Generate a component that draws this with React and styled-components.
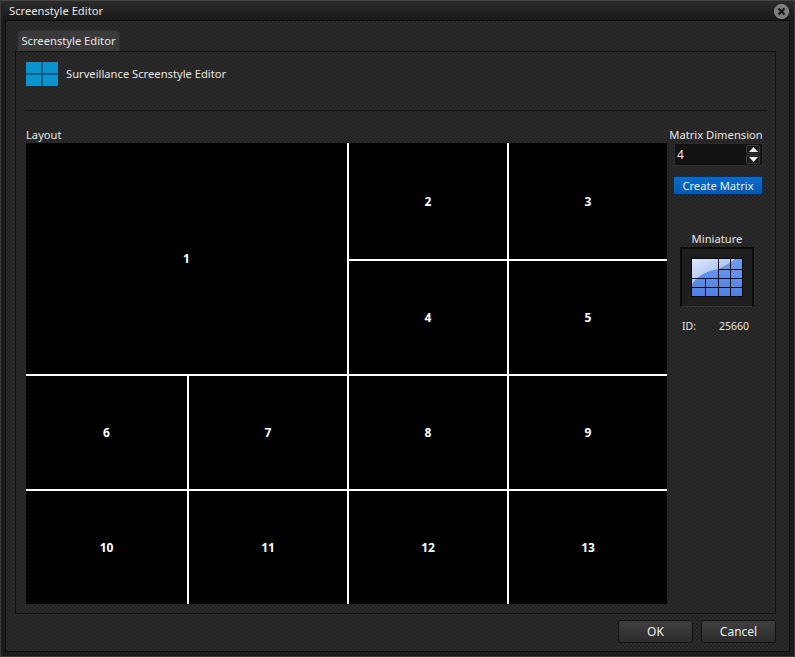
import React from 'react';
import styled, { createGlobalStyle } from 'styled-components';

const texture = `
  background-color: #262626;
  background-image: repeating-conic-gradient(#2c2c2c 0 25%, #222222 0 50%);
  background-size: 4px 4px;
`;

const Global = createGlobalStyle`
  html, body { margin: 0; padding: 0; background: #1a1a1a; }
  body { font-family: "Noto Sans", "Open Sans", sans-serif; font-size: 11.2px; color: #e6e6e6; }
`;

const Window = styled.div`
  width: 795px;
  height: 657px;
  box-sizing: border-box;
  display: flex;
  flex-direction: column;
  background: #1b1b1b;
  border: 1px solid #3a3a3a;
  border-top-color: #444;
  overflow: hidden;
`;

const TitleBar = styled.div`
  height: 19px;
  flex: none;
  display: flex;
  align-items: center;
  justify-content: space-between;
  padding: 0 5px 0 8px;
  background: linear-gradient(#2b2b2b, #191919);
  line-height: 19px;
`;

const CloseButton = styled.div`
  width: 15px;
  height: 15px;
  box-sizing: border-box;
  margin-top: 1px;
  border-radius: 50%;
  background: #7c7c7c;
  border: 1px solid #959595;
  display: flex;
  align-items: center;
  justify-content: center;
`;

const Frame = styled.div`
  ${texture}
  flex: 1;
  margin: 0 4px 4px 4px;
  padding: 9px 13px 0 9px;
  border: 1px solid #0c0c0c;
  display: flex;
  flex-direction: column;
  min-height: 0;
`;

const TabStrip = styled.div`
  display: flex;
  height: 21px;
  padding-left: 2px;
  flex: none;
`;

const Tab = styled.div`
  width: 103px;
  box-sizing: border-box;
  background: #3a3a3a;
  border-radius: 4px 4px 0 0;
  border: 1px solid #2e2e2e;
  border-bottom: none;
  text-align: center;
  line-height: 19px;
`;

const Panel = styled.div`
  height: 563px;
  box-sizing: border-box;
  border: 1px solid #111;
  padding: 10px 8px 0 10px;
  display: flex;
  flex-direction: column;
  flex: none;
`;

const Header = styled.div`
  display: flex;
  align-items: center;
  gap: 8px;
  height: 24px;
  flex: none;
`;

const HeaderTitle = styled.span`
  margin-top: -2px;
`;

const Separator = styled.div`
  height: 1px;
  flex: none;
  background: #111;
  margin-top: 24px;
`;

const Content = styled.div`
  display: flex;
  margin-top: 16px;
  gap: 2px;
`;

const LayoutColumn = styled.div`
  width: 641px;
  display: flex;
  flex-direction: column;
`;

const Label = styled.div`
  height: 16px;
  line-height: 16px;
`;

const Matrix = styled.div`
  height: 461px;
  display: grid;
  grid-template-columns: 161px 158px 158px 158px;
  grid-template-rows: 116px 113px 113px 113px;
  gap: 2px;
  background: #fff;
`;

const Cell = styled.div`
  background: #000;
  color: #fff;
  font-weight: 700;
  font-size: 12px;
  display: flex;
  align-items: center;
  justify-content: center;
  ${p => p.$area && `grid-column: ${p.$area[0]}; grid-row: ${p.$area[1]};`}
`;

const Sidebar = styled.div`
  width: 94px;
  display: flex;
  flex-direction: column;
`;

const SideTitle = styled.div`
  height: 16px;
  line-height: 16px;
  text-align: center;
  white-space: nowrap;
`;

const Spinner = styled.div`
  margin: 0 0 0 5px;
  height: 23px;
  width: 89px;
  box-sizing: border-box;
  background: #121212;
  border: 1px solid #2c2c2c;
  display: flex;
  align-items: center;
  justify-content: space-between;
  padding: 0 2px 0 2px;
  font-size: 12px;
`;

const SpinButtons = styled.div`
  display: flex;
  flex-direction: column;
  gap: 1px;
`;

const SpinButton = styled.div`
  width: 14px;
  height: 9px;
  box-sizing: border-box;
  background: #1a1a1a;
  border: 1px solid #3c3c3c;
  border-radius: 2px;
  display: flex;
  align-items: center;
  justify-content: center;
`;

const PrimaryButton = styled.div`
  margin: 10px 0 0 4px;
  height: 19px;
  width: 90px;
  box-sizing: border-box;
  background: linear-gradient(#0a6cca, #0558ae);
  border: 1px solid #0a2e58;
  border-radius: 2px;
  text-align: center;
  line-height: 17px;
  color: #e6eef8;
`;

const MiniatureBlock = styled.div`
  margin-top: 36px;
  padding-left: 2px;
  display: flex;
  flex-direction: column;
  align-items: center;
`;

const MiniatureTitle = styled.div`
  height: 15px;
  line-height: 15px;
  margin-bottom: 1px;
`;

const MiniatureFrame = styled.div`
  width: 74px;
  height: 60px;
  box-sizing: border-box;
  background: #1e1e1e;
  border: 2px solid #0a0a0a;
  border-bottom: 1px solid #333;
  display: flex;
  align-items: center;
  justify-content: center;
`;

const IdRow = styled.div`
  display: flex;
  justify-content: space-between;
  margin-top: 11px;
  width: 67px;
  margin-right: 3px;
  font-size: 10.5px;
  line-height: 16px;
`;

const Footer = styled.div`
  display: flex;
  justify-content: flex-end;
  gap: 8px;
  margin-top: 6px;
`;

const FooterButton = styled.div`
  width: 75px;
  height: 23px;
  box-sizing: border-box;
  background: linear-gradient(#3f3f3f, #2c2c2c);
  border: 1px solid #111;
  border-radius: 3px;
  text-align: center;
  line-height: 21px;
  color: #eee;
  font-size: 12px;
`;

const cells = [
  { n: 1, area: ['1 / span 2', '1 / span 2'] },
  { n: 2 }, { n: 3 }, { n: 4 }, { n: 5 },
  { n: 6 }, { n: 7 }, { n: 8 }, { n: 9 },
  { n: 10 }, { n: 11 }, { n: 12 }, { n: 13 },
];

const WindowsIcon = () => (
  <svg width="32" height="24" viewBox="0 0 32 24">
    <rect width="32" height="24" fill="#0a93cd" />
    <rect x="15" width="2" height="24" fill="#0b5f86" />
    <rect y="11" width="32" height="2" fill="#0b5f86" />
  </svg>
);

const MiniatureIcon = () => (
  <svg width="52" height="39" viewBox="0 0 52 39">
    <defs>
      <linearGradient id="mb" x1="0" y1="0" x2="0" y2="1">
        <stop offset="0" stopColor="#6f9bee" />
        <stop offset="1" stopColor="#4f80e4" />
      </linearGradient>
      <linearGradient id="ml" x1="0" y1="0" x2="1" y2="1">
        <stop offset="0" stopColor="#dfe8fb" />
        <stop offset="1" stopColor="#8aa9ee" />
      </linearGradient>
    </defs>
    <rect width="52" height="39" fill="#0b0b0b" />
    <rect x="1" y="1" width="50" height="37" fill="url(#mb)" />
    <path d="M1 1H44C38 6 33 8 27 11C15 13 7 18 1 26Z" fill="url(#ml)" />
    <g fill="#0b0b0b">
      <rect x="27" y="0" width="1" height="39" />
      <rect x="39" y="0" width="1" height="39" />
      <rect x="27" y="11" width="25" height="1" />
      <rect x="0" y="20" width="52" height="1" />
      <rect x="0" y="29" width="52" height="1" />
      <rect x="14" y="20" width="1" height="19" />
    </g>
  </svg>
);

export default function App() {
  return (
    <>
      <Global />
      <Window>
        <TitleBar>
          <span>Screenstyle Editor</span>
          <CloseButton>
            <svg width="9" height="9" viewBox="0 0 9 9">
              <path d="M1.5 1.5l6 6M7.5 1.5l-6 6" stroke="#111" strokeWidth="2" />
            </svg>
          </CloseButton>
        </TitleBar>
        <Frame>
          <TabStrip><Tab>Screenstyle Editor</Tab></TabStrip>
          <Panel>
            <Header>
              <WindowsIcon />
              <HeaderTitle>Surveillance Screenstyle Editor</HeaderTitle>
            </Header>
            <Separator />
            <Content>
              <LayoutColumn>
                <Label>Layout</Label>
                <Matrix>
                  {cells.map(c => <Cell key={c.n} $area={c.area}>{c.n}</Cell>)}
                </Matrix>
              </LayoutColumn>
              <Sidebar>
                <SideTitle>Matrix Dimension</SideTitle>
                <Spinner>
                  <span>4</span>
                  <SpinButtons>
                    <SpinButton>
                      <svg width="9" height="5" viewBox="0 0 9 5"><path d="M4.5 0L9 5H0z" fill="#eee" /></svg>
                    </SpinButton>
                    <SpinButton>
                      <svg width="9" height="5" viewBox="0 0 9 5"><path d="M0 0h9L4.5 5z" fill="#eee" /></svg>
                    </SpinButton>
                  </SpinButtons>
                </Spinner>
                <PrimaryButton>Create Matrix</PrimaryButton>
                <MiniatureBlock>
                  <MiniatureTitle>Miniature</MiniatureTitle>
                  <MiniatureFrame><MiniatureIcon /></MiniatureFrame>
                  <IdRow><span>ID:</span><span>25660</span></IdRow>
                </MiniatureBlock>
              </Sidebar>
            </Content>
          </Panel>
          <Footer>
            <FooterButton>OK</FooterButton>
            <FooterButton>Cancel</FooterButton>
          </Footer>
        </Frame>
      </Window>
    </>
  );
}
